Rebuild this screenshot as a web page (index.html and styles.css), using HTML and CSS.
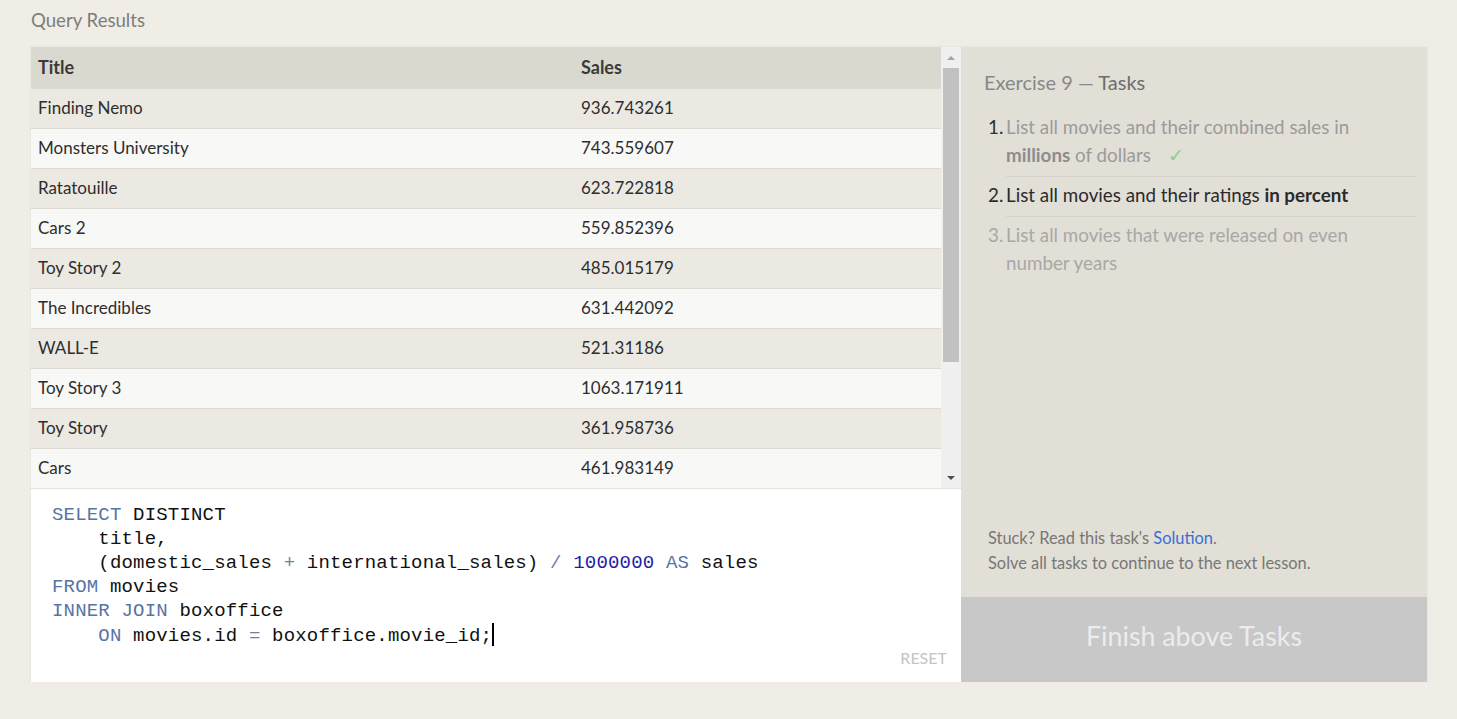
FILE: index.html
```html
<!DOCTYPE html>
<html>
<head>
<meta charset="utf-8">
<link rel="stylesheet" href="styles.css">
</head>
<body>
<div class="page">
  <h2 class="section-title">Query Results</h2>
  <div class="workspace">
    <div class="left">
      <div class="results">
        <div class="table-wrap">
          <table class="grid">
            <thead>
              <tr><th class="c-title">Title</th><th>Sales</th></tr>
            </thead>
            <tbody>
              <tr><td>Finding Nemo</td><td>936.743261</td></tr>
              <tr><td>Monsters University</td><td>743.559607</td></tr>
              <tr><td>Ratatouille</td><td>623.722818</td></tr>
              <tr><td>Cars 2</td><td>559.852396</td></tr>
              <tr><td>Toy Story 2</td><td>485.015179</td></tr>
              <tr><td>The Incredibles</td><td>631.442092</td></tr>
              <tr><td>WALL-E</td><td>521.31186</td></tr>
              <tr><td>Toy Story 3</td><td>1063.171911</td></tr>
              <tr><td>Toy Story</td><td>361.958736</td></tr>
              <tr><td>Cars</td><td>461.983149</td></tr>
              <tr><td>A Bug's Life</td><td>363.398565</td></tr>
              <tr><td>Brave</td><td>538.983207</td></tr>
            </tbody>
          </table>
        </div>
        <div class="scrollbar">
          <div class="sb-btn"><span class="arrow-up"></span></div>
          <div class="sb-track"><div class="sb-thumb"></div></div>
          <div class="sb-btn"><span class="arrow-down"></span></div>
        </div>
      </div>
      <div class="editor">
<pre class="code"><span class="kw">SELECT</span> DISTINCT
    title,
    (domestic_sales <span class="op">+</span> international_sales) <span class="op">/</span> <span class="num">1000000</span> <span class="kw">AS</span> sales
<span class="kw">FROM</span> movies
<span class="kw">INNER JOIN</span> boxoffice
    <span class="kw">ON</span> movies.id <span class="op">=</span> boxoffice.movie_id;<span class="cursor"></span></pre>
        <div class="reset">RESET</div>
      </div>
    </div>
    <div class="right">
      <div class="tasks">
        <h3 class="tasks-title"><span class="ex">Exercise 9 —</span> Tasks</h3>
        <ol class="task-list">
          <li class="task done"><span class="n">1.</span><span class="t">List all movies and their combined sales in <b>millions</b> of dollars <span class="check">✓</span></span></li>
          <li class="task current"><span class="n">2.</span><span class="t">List all movies and their ratings <b>in percent</b></span></li>
          <li class="task todo"><span class="n">3.</span><span class="t">List all movies that were released on even number years</span></li>
        </ol>
        <div class="help">
          <p>Stuck? Read this task's <a class="link">Solution</a>.</p>
          <p>Solve all tasks to continue to the next lesson.</p>
        </div>
      </div>
      <div class="finish">Finish above Tasks</div>
    </div>
  </div>
</div>
</body>
</html>
```

FILE: styles.css
```css
* { box-sizing: border-box; }
html, body { margin: 0; padding: 0; }
body {
  background: #efede6;
  font-family: Lato, "Open Sans", sans-serif;
  color: #333;
}
.page {
  padding: 8px 30px 0 31px;
}
.section-title {
  margin: 0;
  font-weight: 400;
  font-size: 18.6px;
  line-height: 24px;
  color: #7d7d7d;
  height: 39px;
}
.workspace {
  display: flex;
  width: 1396px;
  height: 635px;
  box-shadow: 0 0 2px rgba(0,0,0,0.08);
}
.left {
  width: 930px;
  display: flex;
  flex-direction: column;
  background: #fff;
}
.results {
  display: flex;
  height: 442px;
  border-bottom: 1px solid #e4e2da;
}
.table-wrap {
  width: 910px;
  overflow: hidden;
}
.grid {
  width: 100%;
  border-collapse: collapse;
  font-size: 17px;
  color: #2e2e2e;
}
.grid th {
  background: #dad9cf;
  text-align: left;
  font-weight: 700;
  height: 41px;
  padding: 0 7px;
  font-size: 18px;
  color: #3a3a3a;
}
.grid th.c-title { width: 543px; }
.grid td {
  height: 40px;
  padding: 0 7px 2px;
  border-top: 1px solid #dcdbd3;
}
.grid tbody tr:nth-child(odd) td { background: #ebe9e2; }
.grid tbody tr:nth-child(even) td { background: #f8f8f7; }
.scrollbar {
  width: 20px;
  background: #f0f0f0;
  display: flex;
  flex-direction: column;
}
.sb-btn {
  height: 21px;
  display: flex;
  align-items: center;
  justify-content: center;
}
.arrow-up, .arrow-down {
  width: 0; height: 0;
  border-left: 4px solid transparent;
  border-right: 4px solid transparent;
}
.arrow-up { border-bottom: 4px solid #a3a3a3; }
.arrow-down { border-top: 4px solid #505050; }
.sb-track {
  flex: 1;
  padding: 0 2px;
}
.sb-thumb {
  height: 294px;
  background: #c1c1c1;
}
.editor {
  flex: 1;
  position: relative;
  padding: 14px 21px;
}
.code {
  margin: 0;
  font-family: "Liberation Mono", "DejaVu Sans Mono", monospace;
  font-size: 19px;
  letter-spacing: 0.18px;
  line-height: 24px;
  color: #111;
}
.code .kw { color: #5874a6; }
.code .op { color: #6f7fa8; }
.code .num { color: #1f1ca8; }
.cursor {
  display: inline-block;
  width: 2px;
  height: 23px;
  background: #000;
  vertical-align: -5px;
}
.reset {
  position: absolute;
  right: 14px;
  bottom: 15px;
  font-size: 16px;
  color: #c4c4c4;
}
.right {
  width: 466px;
  display: flex;
  flex-direction: column;
  background: #e2dfd6;
}
.tasks {
  flex: 1;
  display: flex;
  flex-direction: column;
  padding: 21px 11px 0 23px;
}
.tasks-title {
  margin: 0;
  font-size: 20px;
  font-weight: 400;
  line-height: 28px;
  color: #6d6d6d;
}
.tasks-title .ex { color: #888; }
.task-list {
  list-style: none;
  margin: 17px 0 0;
  padding: 0 0 0 4px;
}
.task {
  display: flex;
  font-size: 18.8px;
  line-height: 28px;
}
.task .n { width: 18px; flex: none; }
.task .t {
  flex: 1;
  padding: 0 8px 7px 0;
  border-bottom: 1px solid #d6d3ca;
  margin-bottom: 4px;
}
.task.todo .t { border-bottom: none; }
.task.done .n { color: #2e2e2e; }
.task.done .t { color: #9b9b9b; }
.task.done b { color: #8d8d8d; }
.check { color: #8fce8f; margin-left: 12px; }
.task.current { color: #2b2b2b; }
.task.todo { color: #a8a8a8; }
.help {
  margin-top: auto;
  padding: 0 0 22px 4px;
  font-size: 16.4px;
  line-height: 25px;
  color: #777;
}
.help p { margin: 0; }
.link { color: #3a6fd4; }
.finish {
  height: 85px;
  background: #c8c8c8;
  color: #ececec;
  font-size: 26.8px;
  display: flex;
  align-items: center;
  justify-content: center;
  padding-bottom: 7px;
}
```
